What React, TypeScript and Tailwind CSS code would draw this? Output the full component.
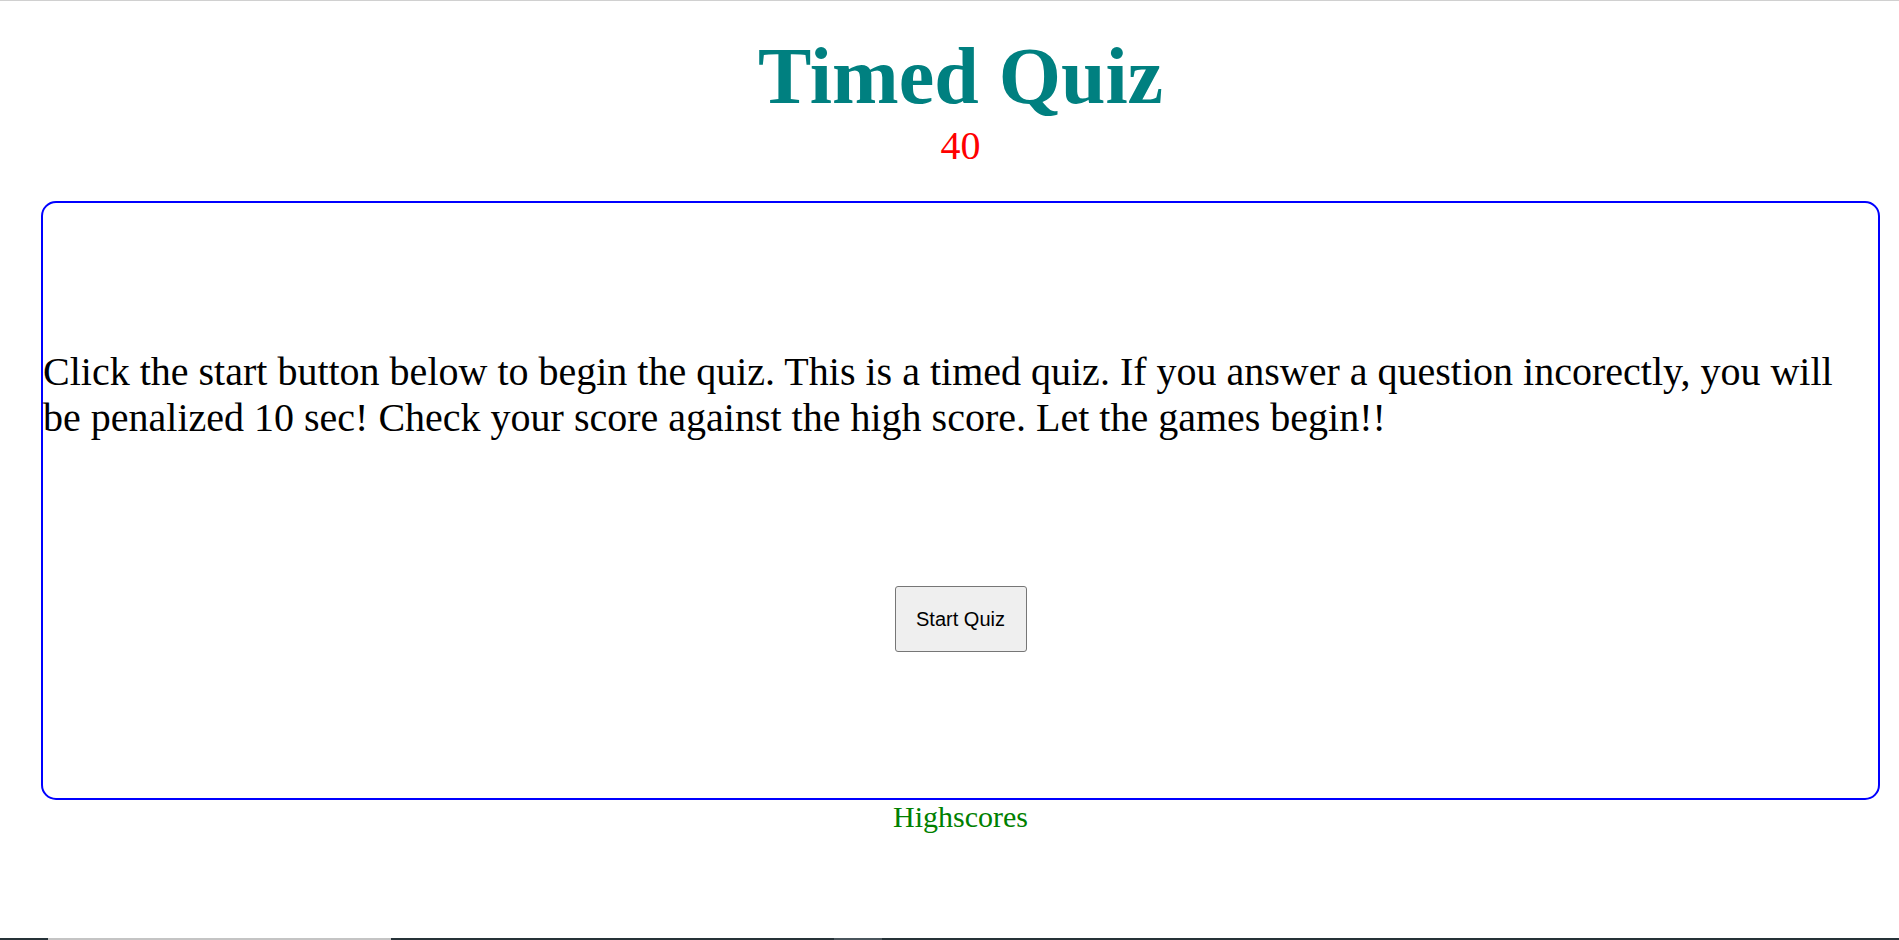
import React from 'react';

const serif = "font-['Liberation_Serif','Times_New_Roman',serif]";

const App: React.FC = () => {
    return (
        <div className="min-h-screen flex flex-col bg-white border-t border-[#d0d0d0]">
            <div className="ml-[41px] mr-[19px] flex flex-col">
                {/* Header */}
                <h1 className={`${serif} mt-[29px] text-center text-[80px] leading-[92px] font-bold text-[#008080]`}>
                    Timed Quiz
                </h1>
                <div className={`${serif} mt-[1px] text-center text-[40px] leading-[46px] text-[#ff0000]`}>40</div>

                {/* Quiz card */}
                <div className="mt-[32px] h-[599px] border-2 border-[#0000ff] rounded-[15px] flex flex-col items-center justify-evenly">
                    <p className={`${serif} self-stretch text-[40px] leading-[46px] text-black`}>
                        Click the start button below to begin the quiz. This is a timed quiz. If you answer a question incorectly, you will be penalized 10 sec! Check your score against the high score. Let the games begin!!
                    </p>
                    <button className="w-[132px] h-[66px] bg-[#efefef] border border-[#767676] rounded-[3px] font-['Liberation_Sans',Arial,sans-serif] text-[20px] text-black hover:bg-[#e5e5e5]">
                        Start Quiz
                    </button>
                </div>

                <a href="#" className={`${serif} text-center text-[30px] leading-[34.5px] text-[#008000]`}>
                    Highscores
                </a>
            </div>

            <div className="flex-1" />

            {/* bottom strip */}
            <div className="h-[2px] flex">
                <div className="w-[48px] bg-[#263238]" />
                <div className="w-[343px] bg-[#c4c4c4]" />
                <div className="w-[443px] bg-[#263238]" />
                <div className="w-[48px] bg-[#4a555c]" />
                <div className="flex-1 bg-[#263238]" />
            </div>
        </div>
    );
};

export default App;
